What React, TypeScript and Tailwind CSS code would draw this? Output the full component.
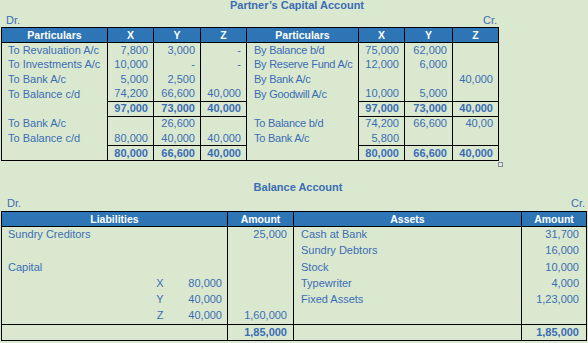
type Row = [string, string, string, string, string, string, string, string];

const capitalRows: { cells: Row; total?: boolean }[] = [
  { cells: ["To Revaluation A/c", "7,800", "3,000", "-", "By Balance b/d", "75,000", "62,000", ""] },
  { cells: ["To Investments A/c", "10,000", "-", "-", "By Reserve Fund A/c", "12,000", "6,000", ""] },
  { cells: ["To Bank A/c", "5,000", "2,500", "", "By Bank A/c", "", "", "40,000"] },
  { cells: ["To Balance c/d", "74,200", "66,600", "40,000", "By Goodwill A/c", "10,000", "5,000", ""] },
  { cells: ["", "97,000", "73,000", "40,000", "", "97,000", "73,000", "40,000"], total: true },
  { cells: ["To Bank A/c", "", "26,600", "", "To Balance b/d", "74,200", "66,600", "40,00"] },
  { cells: ["To Balance c/d", "80,000", "40,000", "40,000", "To Bank A/c", "5,800", "", ""] },
  { cells: ["", "80,000", "66,600", "40,000", "", "80,000", "66,600", "40,000"], total: true },
];

const liabilities: { label: string; partner?: string; sub?: string; amount?: string }[] = [
  { label: "Sundry Creditors", amount: "25,000" },
  { label: "" },
  { label: "Capital" },
  { label: "", partner: "X", sub: "80,000" },
  { label: "", partner: "Y", sub: "40,000" },
  { label: "", partner: "Z", sub: "40,000", amount: "1,60,000" },
];

const assets: [string, string][] = [
  ["Cash at Bank", "31,700"],
  ["Sundry Debtors", "16,000"],
  ["Stock", "10,000"],
  ["Typewriter", "4,000"],
  ["Fixed Assets", "1,23,000"],
  ["", ""],
];

const th = "border border-black bg-[#2e75b6] p-0 text-center text-[10.5px] font-bold text-white";

export default function App() {
  return (
    <div
      className="h-[343px] w-[588px] overflow-hidden bg-[#dae8cf] text-[11px] leading-[13px] text-[#3a6db5]"
      style={{ fontFamily: '"Liberation Sans", Arial, sans-serif' }}
    >
      <h1 className="pl-[6px] text-center text-[11px] font-bold leading-[11px]">Partner’s Capital Account</h1>
      <div className="flex w-[497px] justify-between pl-[6px] pt-[3px] leading-[13px]">
        <span>Dr.</span>
        <span>Cr.</span>
      </div>

      <div className="relative ml-[1px] w-[497px]">
        <table className="w-[497px] table-fixed border-collapse">
          <colgroup>
            <col className="w-[106px]" />
            <col className="w-[46px]" />
            <col className="w-[47px]" />
            <col className="w-[46px]" />
            <col className="w-[112px]" />
            <col className="w-[46px]" />
            <col className="w-[48px]" />
            <col className="w-[46px]" />
          </colgroup>
          <thead>
            <tr className="h-[15px]">
              <th className={th}>Particulars</th>
              <th className={th}>X</th>
              <th className={th}>Y</th>
              <th className={th}>Z</th>
              <th className={th}>Particulars</th>
              <th className={th}>X</th>
              <th className={th}>Y</th>
              <th className={th}>Z</th>
            </tr>
          </thead>
          <tbody>
            {capitalRows.map((row, i) => (
              <tr key={i} className="h-[14.75px]">
                {row.cells.map((c, j) => {
                  const isText = j === 0 || j === 4;
                  const last = i === capitalRows.length - 1;
                  return (
                    <td
                      key={j}
                      className={[
                        "whitespace-nowrap border-x border-black p-0",
                        isText ? (j === 0 ? "pl-[6px] text-left" : "pl-[7px] text-left tracking-[-0.25px]") : "pr-[5px] text-right",
                        row.total && !isText ? "border-y font-bold" : "",
                        last ? "border-b" : "",
                      ].join(" ")}
                    >
                      {c}
                    </td>
                  );
                })}
              </tr>
            ))}
          </tbody>
        </table>
        <span className="absolute -right-[5px] -bottom-[6px] h-[5px] w-[5px] border border-[#8a8a8a] bg-[#e8e8e8]" />
      </div>

      <h2 className="mt-[20px] pl-[8px] text-center text-[11px] font-bold leading-[13px]">Balance Account</h2>
      <div className="flex w-[585px] justify-between pl-[7px] pt-[3px] leading-[13px]">
        <span>Dr.</span>
        <span>Cr.</span>
      </div>

      <table className="ml-[1px] mt-[1px] w-[585px] table-fixed border-collapse">
        <colgroup>
          <col className="w-[226px]" />
          <col className="w-[66px]" />
          <col className="w-[228px]" />
          <col className="w-[65px]" />
        </colgroup>
        <thead>
          <tr className="h-[15px]">
            <th className={th}>Liabilities</th>
            <th className={th}>Amount</th>
            <th className={th}>Assets</th>
            <th className={th}>Amount</th>
          </tr>
        </thead>
        <tbody>
          {liabilities.map((l, i) => (
            <tr key={i} className="h-[16.3px]">
              <td className="whitespace-nowrap border-x border-black p-0 pl-[6px]">
                {l.partner ? (
                  <div className="flex justify-end pr-[5px]">
                    <span className="w-[14px] text-center">{l.partner}</span>
                    <span className="w-[55px] text-right">{l.sub}</span>
                  </div>
                ) : (
                  l.label
                )}
              </td>
              <td className="border-x border-black p-0 pr-[6px] text-right">{l.amount}</td>
              <td className="whitespace-nowrap border-x border-black p-0 pl-[7px]">{assets[i][0]}</td>
              <td className="border-x border-black p-0 pr-[7px] text-right">{assets[i][1]}</td>
            </tr>
          ))}
          <tr className="h-[16px]">
            <td className="border border-black p-0" />
            <td className="border border-black p-0 pr-[6px] text-right font-bold">1,85,000</td>
            <td className="border border-black p-0" />
            <td className="border border-black p-0 pr-[7px] text-right font-bold">1,85,000</td>
          </tr>
        </tbody>
      </table>
    </div>
  );
}
